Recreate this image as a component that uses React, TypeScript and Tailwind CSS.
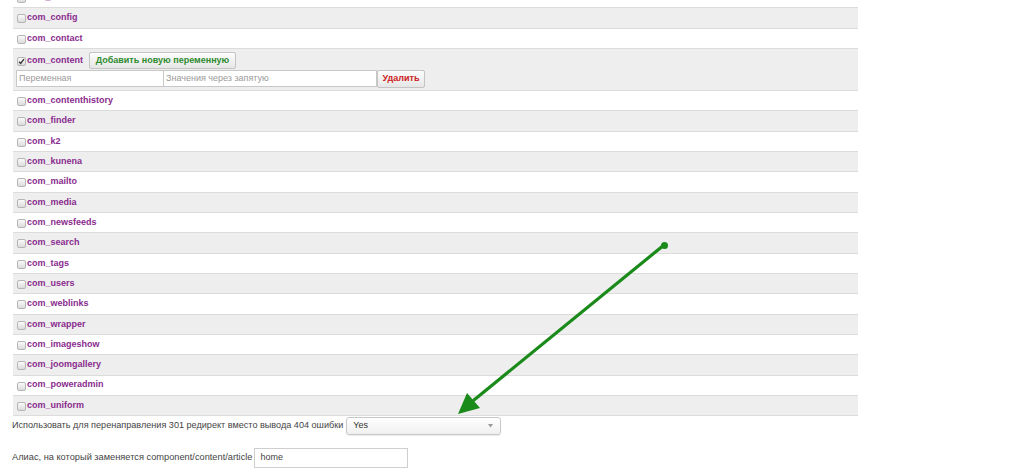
import React from "react";

const names = [
  "com_banners",
  "com_config",
  "com_contact",
  "com_content",
  "com_contenthistory",
  "com_finder",
  "com_k2",
  "com_kunena",
  "com_mailto",
  "com_media",
  "com_newsfeeds",
  "com_search",
  "com_tags",
  "com_users",
  "com_weblinks",
  "com_wrapper",
  "com_imageshow",
  "com_joomgallery",
  "com_poweradmin",
  "com_uniform",
];

function Check({ checked }: { checked?: boolean }) {
  return (
    <span className="relative inline-flex w-[9px] h-[9px] mr-[1px] mt-[2px] rounded-[2px] border border-[#b5b5b5] bg-gradient-to-b from-[#fafafa] to-[#dcdcdc] shrink-0 items-center justify-center">
      {checked && (
        <svg width="7" height="7" viewBox="0 0 8 8" className="absolute">
          <path d="M1.2 4.2 L3 6.2 L6.8 1.2" stroke="#333" strokeWidth="1.5" fill="none" />
        </svg>
      )}
    </span>
  );
}

export default function App() {
  return (
    <div
      className="relative w-[1024px] h-[476px] overflow-hidden bg-white"
      style={{ fontFamily: '"Liberation Sans", Arial, sans-serif' }}
    >
      <div className="ml-[13px] w-[845px] mt-[-12px]">
        {names.map((n, i) => {
          const gray = i % 2 === 1;
          const bg = gray ? "bg-[#eeeeee]" : "bg-white";
          if (n === "com_content") {
            return (
              <div key={n} className={`${bg} h-[42px] border-b border-[#dcdcdc] pl-[4px] pt-[3px]`}>
                <div className="flex items-center h-[18px]">
                  <Check checked />
                  <span className="text-[9px] font-bold text-[#8a2b8e]">{n}</span>
                  <span className="ml-[6px] h-[17px] w-[147px] flex items-center justify-center border border-[#c4c4c4] rounded-[2px] bg-gradient-to-b from-[#fdfdfd] to-[#e6e6e6] text-[9px] font-bold text-[#2e8b2e]">
                    Добавить новую переменную
                  </span>
                </div>
                <div className="flex items-center ml-[-1px] h-[18px]">
                  <span className="h-[17px] w-[148px] border border-[#c8c8c8] bg-white text-[9px] text-[#9a9a9a] pl-[2px] flex items-center">
                    Переменная
                  </span>
                  <span className="h-[17px] w-[213px] border border-l-0 border-[#c8c8c8] bg-white text-[9px] text-[#9a9a9a] pl-[2px] flex items-center">
                    Значения через запятую
                  </span>
                  <span className="h-[18px] w-[48px] flex items-center justify-center border border-[#c4c4c4] rounded-[2px] bg-gradient-to-b from-[#fdfdfd] to-[#e6e6e6] text-[9px] font-bold text-[#cc2222]">
                    Удалить
                  </span>
                </div>
              </div>
            );
          }
          return (
            <div
              key={n}
              className={`${bg} h-[20.33px] border-b border-[#dcdcdc] pl-[4px] flex items-center`}
            >
              <Check />
              <span className="text-[9px] font-bold text-[#8a2b8e]">{n}</span>
            </div>
          );
        })}
      </div>

      <div className="ml-[12px] mt-[1px] flex items-center h-[18px]">
        <span className="text-[9.1px] text-[#444]">
          Использовать для перенаправления 301 редирект вместо вывода 404 ошибки
        </span>
        <span className="ml-[3px] h-[18px] w-[155px] rounded-[3px] border border-[#c8c8c8] bg-gradient-to-b from-white to-[#f0f0f0] flex items-center justify-between pl-[6px] pr-[7px] shadow-[0_1px_1px_rgba(0,0,0,0.08)]">
          <span className="text-[9px] text-[#333]">Yes</span>
          <svg width="5" height="4" viewBox="0 0 5 4">
            <path d="M0 0 L5 0 L2.5 3.5 Z" fill="#999" />
          </svg>
        </span>
      </div>

      <div className="ml-[12px] mt-[13px] flex items-center h-[20px]">
        <span className="text-[9.25px] text-[#444]">
          Алиас, на который заменяется component/content/article
        </span>
        <span className="ml-[2px] h-[20px] w-[154px] border border-[#cfcfcf] bg-white flex items-center pl-[5px] text-[9px] text-[#444]">
          home
        </span>
      </div>

      <svg
        className="absolute left-0 top-0 pointer-events-none"
        width="1024"
        height="476"
        viewBox="0 0 1024 476"
      >
        <line x1="664" y1="245" x2="474" y2="400" stroke="#1a8a1a" strokeWidth="3.2" strokeLinecap="round" />
        <circle cx="664.5" cy="245.5" r="3.5" fill="#1a8a1a" />
        <path d="M458 414 L467 393 L480 408 Z" fill="#1a8a1a" />
      </svg>
    </div>
  );
}
